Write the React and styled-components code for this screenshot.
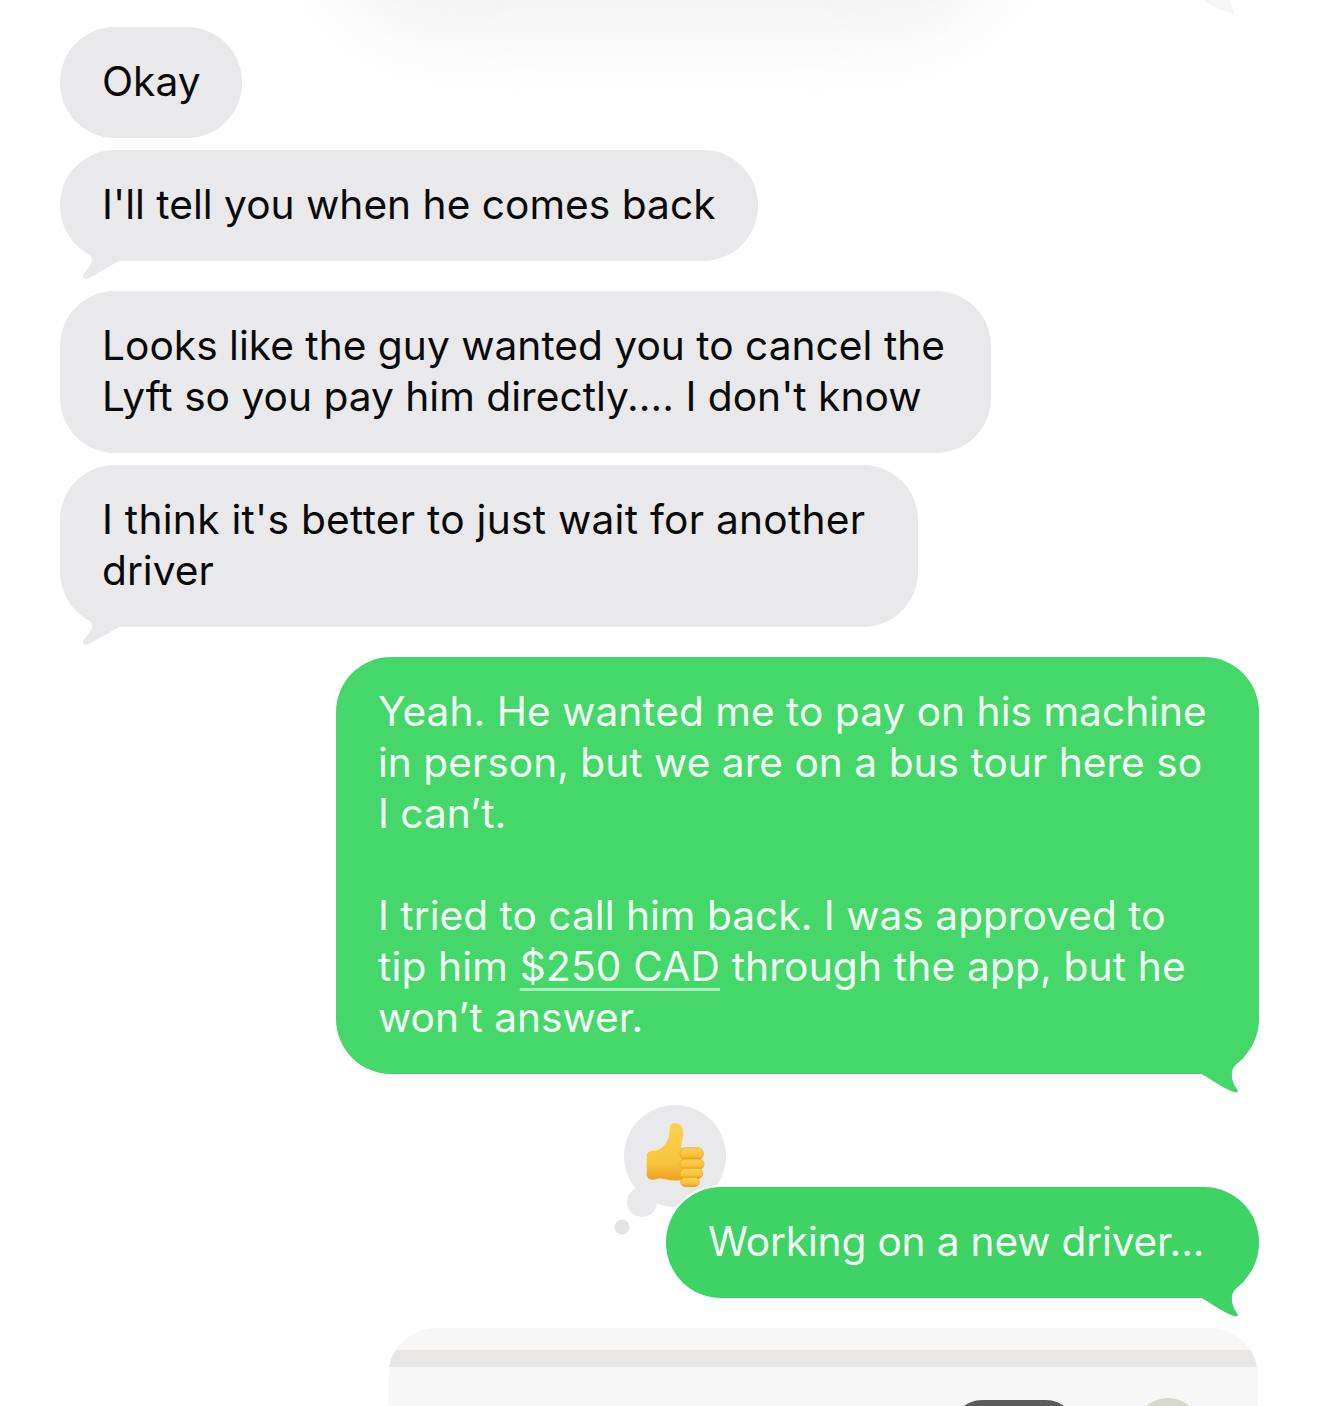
import React from 'react';
import styled, { createGlobalStyle } from 'styled-components';

const Global = createGlobalStyle`
  html, body {
    margin: 0;
    padding: 0;
    background: #fff;
  }
`;

const Page = styled.div`
  position: relative;
  width: 1320px;
  height: 1406px;
  overflow: hidden;
  box-sizing: border-box;
  padding: 27px 61px 0 60px;
  display: flex;
  flex-direction: column;
  font-family: Inter, "Liberation Sans", sans-serif;
  font-size: 40.7px;
  line-height: 51px;
`;

// soft shadow left by the sheet above the thread
const TopShade = styled.div`
  position: absolute;
  top: -110px;
  left: 320px;
  width: 690px;
  height: 150px;
  border-radius: 0 0 120px 120px;
  background: #f2f2f2;
  filter: blur(42px);
`;

const FadedTail = styled.svg`
  position: absolute;
  top: 0;
  left: 1200px;
`;

const Row = styled.div`
  display: flex;
  position: relative;
  justify-content: ${(p) => (p.$mine ? 'flex-end' : 'flex-start')};
  margin-bottom: ${(p) => p.$gap || 12}px;
`;

const Bubble = styled.div`
  position: relative;
  box-sizing: border-box;
  width: ${(p) => p.$width}px;
  padding: 29px 0 31px 42px;
  border-radius: 55px;
  white-space: nowrap;
  color: ${(p) => (p.$mine ? '#f2fff5' : '#0a0a0a')};
  background: ${(p) => (p.$mine ? p.$green || '#46d76b' : '#e9e9eb')};
`;

const GreenBubble = styled(Bubble)`
  box-shadow: 0 0 0 2px #fff;
`;

// lines that set a little wider or tighter than the rest
const Line = styled.span`
  letter-spacing: ${(p) => p.$track}px;
`;

const Tail = styled.svg`
  position: absolute;
  bottom: -20px;
  ${(p) => (p.$mine ? 'right: 5px;' : 'left: 15px;')}
`;

const Link = styled.span`
  text-decoration: underline;
  text-decoration-thickness: 3px;
  text-decoration-color: rgba(255, 255, 255, 0.55);
  text-underline-offset: 7px;
`;

const Reaction = styled.svg`
  position: absolute;
  left: 532px;
  top: -87px;
`;

const Attachment = styled.div`
  position: relative;
  align-self: flex-end;
  width: 870px;
  margin-right: 1px;
  height: 120px;
  border-radius: 48px 48px 0 0;
  background: #f7f7f7;
  overflow: hidden;
  padding-top: 22px;
  box-sizing: border-box;
`;

const Strip = styled.div`
  height: 17px;
  background: #e9e7e6;
`;

const CarRoof = styled.div`
  position: absolute;
  left: 564px;
  top: 72px;
  width: 124px;
  height: 30px;
  border-radius: 34px 34px 0 0;
  background: #5c5c5c;
`;

const Lamp = styled.div`
  position: absolute;
  left: 747px;
  top: 70px;
  width: 66px;
  height: 40px;
  border-radius: 33px 33px 0 0;
  background: #d8d8cc;
`;

const GreyTail = () => (
  <Tail width="50" height="40" viewBox="0 0 50 40">
    <path
      d="M10 8 L45 8 L45 20 C38 23 25 31 14 37 C9 39 7 36 8 34 C12 28 17 24 17 19 C17 15 14 11 10 8 Z"
      fill="#e9e9eb"
    />
  </Tail>
);

const GreenTail = ({ fill }) => (
  <Tail $mine width="60" height="40" viewBox="0 0 60 40">
    <path
      d="M6 5 L52 0 C50 5 44 8 40 13 C36 18 38 29 43 35 C45 38 43 39 40 38 C30 35 18 26 6 19 Z"
      fill={fill}
    />
  </Tail>
);

// thumbs-up tapback drawn over the grey thought bubble
const ThumbsUp = () => (
  <Reaction width="140" height="140" viewBox="0 0 140 140">
    <defs>
      <linearGradient id="hand" x1="0" y1="0" x2="0" y2="1">
        <stop offset="0" stopColor="#fdd050" />
        <stop offset="0.7" stopColor="#f9c43c" />
        <stop offset="1" stopColor="#ee9f1e" />
      </linearGradient>
      <linearGradient id="finger" x1="0" y1="0" x2="0" y2="1">
        <stop offset="0" stopColor="#fdd14e" />
        <stop offset="0.65" stopColor="#f9c23a" />
        <stop offset="1" stopColor="#ea971a" />
      </linearGradient>
    </defs>
    <circle cx="83" cy="56" r="51" fill="#e9e9eb" />
    <circle cx="50" cy="102" r="15" fill="#e9e9eb" />
    <circle cx="30" cy="127" r="7.5" fill="#e3e3e6" />
    <g transform="translate(38 10) scale(0.3333)" stroke="#ea9d22" strokeWidth="0">
      <path
        d="M50 138 C50 126 60 122 76 122 C96 118 110 100 117 80 C120 66 117 52 122 44 C128 36 146 38 154 48 C163 60 160 84 152 112 L166 118 L166 206 C140 218 108 208 88 205 C66 214 50 208 50 192 Z"
        fill="url(#hand)"
      />
      <rect x="150" y="113" width="70" height="37" rx="18" fill="url(#finger)" strokeWidth="2" />
      <rect x="150" y="147" width="72" height="32" rx="16" fill="url(#finger)" strokeWidth="2" />
      <rect x="150" y="175" width="68" height="31" rx="15" fill="url(#finger)" strokeWidth="2" />
      <rect x="152" y="202" width="56" height="28" rx="14" fill="url(#finger)" strokeWidth="2" />
    </g>
  </Reaction>
);

export default function App() {
  return (
    <Page>
      <Global />
      <TopShade />
      <FadedTail width="40" height="20" viewBox="0 0 40 20">
        <path d="M4 0 L30 0 L35 15 C28 12 12 8 4 0 Z" fill="#f6f6f6" />
      </FadedTail>

      <Row>
        <Bubble $width={182}>Okay</Bubble>
      </Row>
      <Row $gap={30}>
        <Bubble $width={698}>
          I'll tell you when he comes back
          <GreyTail />
        </Bubble>
      </Row>
      <Row>
        <Bubble $width={931}>
          Looks like the guy wanted you to cancel the
          <br />
          Lyft so you pay him directly.... I don't know
        </Bubble>
      </Row>
      <Row $gap={30}>
        <Bubble $width={858}>
          <Line $track={0.25}>I think it's better to just wait for another</Line>
          <br />
          driver
          <GreyTail />
        </Bubble>
      </Row>
      <Row $mine $gap={113}>
        <Bubble $mine $width={923}>
          Yeah. He wanted me to pay on his machine
          <br />
          in person, but we are on a bus tour here so
          <br />
          I can’t.
          <br />
          <br />
          I tried to call him back. I was approved to
          <br />
          <Line $track={0.15}>
            tip him <Link>$250 CAD</Link> through the app, but he
          </Line>
          <br />
          won’t answer.
          <GreenTail fill="#46d76b" />
        </Bubble>
      </Row>
      <Row $mine $gap={30}>
        <ThumbsUp />
        <GreenBubble $mine $green="#3fd264" $width={593}>
          <Line $track={-0.2}>Working on a new driver...</Line>
          <GreenTail fill="#3fd264" />
        </GreenBubble>
      </Row>
      <Attachment>
        <Strip />
        <CarRoof />
        <Lamp />
      </Attachment>
    </Page>
  );
}
